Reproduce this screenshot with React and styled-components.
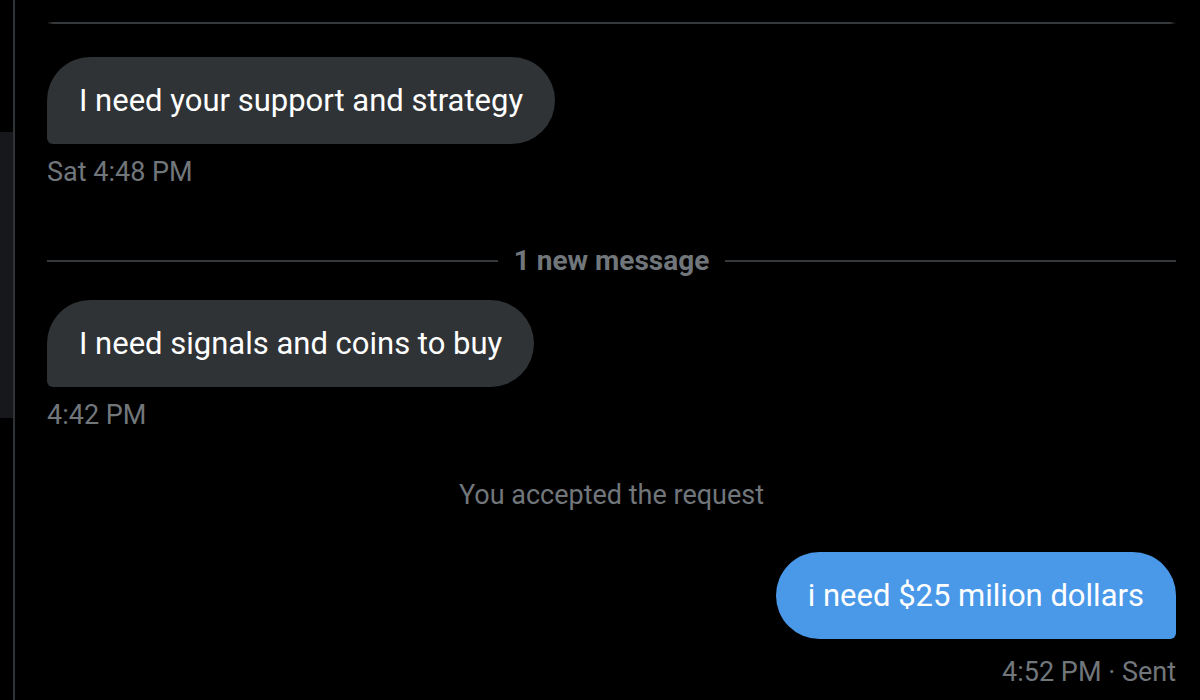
import React from "react"
import styled, { createGlobalStyle } from "styled-components"

const GlobalStyle = createGlobalStyle`
  html, body {
    margin: 0;
    padding: 0;
    background: #000;
  }
  body {
    font-family: Roboto, "Liberation Sans", Arial, sans-serif;
    color: #e7e9ea;
    -webkit-font-smoothing: antialiased;
  }
`

const colors = {
  bubble: "#2f3336",
  blue: "#4a99e9",
  muted: "#71767b",
  rule: "#36393c",
  border: "#2f3336",
  panel: "#16181c",
}

const Screen = styled.div`
  display: flex;
  width: 1200px;
  height: 700px;
  overflow: hidden;
  background: #000;
`

const Sidebar = styled.aside`
  width: 13px;
  flex-shrink: 0;
  border-right: 2px solid ${colors.border};
  padding-top: 132px;
`

const ActiveItem = styled.div`
  height: 286px;
  background: ${colors.panel};
`

const Conversation = styled.main`
  flex: 1;
  display: flex;
  flex-direction: column;
  padding: 22px 24px 0 32px;
`

const TopRule = styled.div`
  height: 2px;
  background: linear-gradient(
    to right,
    transparent,
    ${colors.rule} 6px,
    ${colors.rule} calc(100% - 6px),
    transparent
  );
`

const Group = styled.div`
  display: flex;
  flex-direction: column;
  align-items: ${(p) => (p.$sent ? "flex-end" : "flex-start")};
  margin-top: ${(p) => p.$top}px;
`

const Bubble = styled.div`
  background: ${(p) => (p.$sent ? colors.blue : colors.bubble)};
  color: #fff;
  font-size: 31px;
  line-height: 39px;
  padding: 24px 32px;
  border-radius: ${(p) => (p.$sent ? "44px 44px 6px 44px" : "44px 44px 44px 6px")};
  white-space: nowrap;
`

const Time = styled.div`
  margin-top: ${(p) => (p.$sent ? 18 : 13)}px;
  font-size: 27px;
  line-height: 30px;
  color: ${colors.muted};
`

const Divider = styled.div`
  display: flex;
  align-items: center;
  gap: 16px;
  margin-top: ${(p) => p.$top}px;
  &::before,
  &::after {
    content: "";
    flex: 1;
    height: 2px;
    background: ${colors.rule};
  }
`

const DividerLabel = styled.span`
  font-size: 28px;
  font-weight: 700;
  line-height: 34px;
  color: ${colors.muted};
`

const Notice = styled.div`
  margin-top: ${(p) => p.$top}px;
  text-align: center;
  font-size: 27px;
  line-height: 30px;
  color: ${colors.muted};
`

const Message = ({ text, time, sent, top }) => (
  <Group $sent={sent} $top={top}>
    <Bubble $sent={sent}>{text}</Bubble>
    <Time $sent={sent}>{time}</Time>
  </Group>
)

export default function App() {
  return (
    <>
      <GlobalStyle />
      <Screen>
        <Sidebar>
          <ActiveItem />
        </Sidebar>
        <Conversation>
          <TopRule />
          <Message top={33} text="I need your support and strategy" time="Sat 4:48 PM" />
          <Divider $top={57}>
            <DividerLabel>1 new message</DividerLabel>
          </Divider>
          <Message top={22} text="I need signals and coins to buy" time="4:42 PM" />
          <Notice $top={50}>You accepted the request</Notice>
          <Message sent top={42} text="i need $25 milion dollars" time="4:52 PM · Sent" />
        </Conversation>
      </Screen>
    </>
  )
}
